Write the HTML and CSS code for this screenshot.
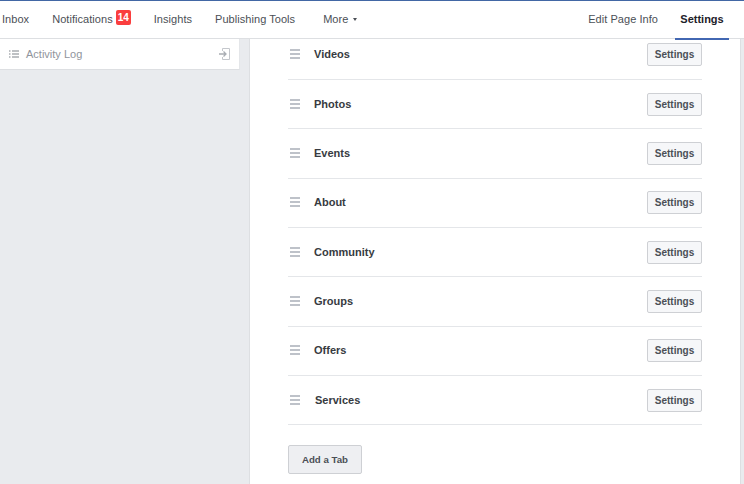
FILE: index.html
```html
<!DOCTYPE html>
<html lang="en">
<head>
<meta charset="utf-8">
<title>Page Settings</title>
<link rel="stylesheet" href="styles.css">
</head>
<body>
<header class="topbar">
  <nav class="nav nav-left">
    <a class="nav-item nav-inbox">Inbox</a>
    <a class="nav-item nav-notif">Notifications<span class="badge">14</span></a>
    <a class="nav-item nav-insights">Insights</a>
    <a class="nav-item nav-tools">Publishing Tools</a>
    <a class="nav-item nav-more">More<span class="caret"></span></a>
  </nav>
  <nav class="nav nav-right">
    <a class="nav-item nav-edit">Edit Page Info</a>
    <a class="nav-item nav-active">Settings</a>
  </nav>
</header>
<div class="layout">
  <aside class="sidebar">
    <div class="activity">
      <svg class="icon-list" width="10" height="8" viewBox="0 0 10 8"><path d="M0 1h1.500M3 1h7M0 4h1.500M3 4h7M0 7h1.500M3 7h7" stroke="#7f838a" stroke-width="1.100" fill="none"/></svg>
      <span class="activity-label">Activity Log</span>
      <svg class="icon-exit" width="11" height="12" viewBox="0 0 11 12"><path d="M3.500 3V.5h7v11h-7V9" stroke="#c4c7cc" fill="none"/><path d="M0 6h6.500M4.500 3.500L7 6l-2.500 2.500" stroke="#a9adb3" stroke-width="1.300" fill="none"/></svg>
    </div>
  </aside>
  <main class="panel">
    <ul class="tabs">
      <li class="tab"><span class="grip"></span><span class="tab-name">Videos</span><button class="btn">Settings</button></li>
      <li class="tab"><span class="grip"></span><span class="tab-name">Photos</span><button class="btn">Settings</button></li>
      <li class="tab"><span class="grip"></span><span class="tab-name">Events</span><button class="btn">Settings</button></li>
      <li class="tab"><span class="grip"></span><span class="tab-name">About</span><button class="btn">Settings</button></li>
      <li class="tab"><span class="grip"></span><span class="tab-name">Community</span><button class="btn">Settings</button></li>
      <li class="tab"><span class="grip"></span><span class="tab-name">Groups</span><button class="btn">Settings</button></li>
      <li class="tab"><span class="grip"></span><span class="tab-name">Offers</span><button class="btn">Settings</button></li>
      <li class="tab"><span class="grip"></span><span class="tab-name tab-name-services">Services</span><button class="btn">Settings</button></li>
    </ul>
    <button class="add-tab">Add a Tab</button>
  </main>
</div>
</body>
</html>
```
FILE: styles.css
```css
* { box-sizing: border-box; }
html, body { margin: 0; height: 100%; }
body {
  width: 744px;
  height: 484px;
  overflow: hidden;
  background: #e9ebee;
  font-family: "Liberation Sans", Arial, sans-serif;
  font-size: 11px;
  color: #4b4f56;
  display: flex;
  flex-direction: column;
}
.topbar {
  flex: none;
  height: 39px;
  background: #fff;
  border-top: 1px solid #4267a5;
  border-bottom: 1px solid #dddfe2;
  display: flex;
  justify-content: space-between;
}
.nav { display: flex; }
.nav-item {
  display: flex;
  align-items: center;
  height: 38px;
  padding-bottom: 2px;
  color: #4b4f56;
  white-space: nowrap;
  letter-spacing: .05px;
}
.nav-inbox { margin-left: 2px; }
.nav-notif { margin-left: 23px; }
.nav-insights { margin-left: 23px; }
.nav-tools { margin-left: 23px; }
.nav-more { margin-left: 28px; }
.badge {
  margin-left: 3px;
  margin-bottom: 3px;
  width: 15px;
  height: 15px;
  border-radius: 2px;
  background: #fa3e3e;
  color: #fff;
  font-size: 10px;
  font-weight: 700;
  line-height: 15px;
  text-align: center;
}
.caret {
  margin-left: 5px;
  border: 2px solid transparent;
  border-top: 3px solid #4b4f56;
  border-bottom: 0;
}
.nav-edit { margin-right: 17px; }
.nav-active {
  width: 54px;
  margin-right: 15px;
  justify-content: center;
  color: #1d2129;
  font-weight: 700;
  letter-spacing: 0;
  position: relative;
}
.nav-active::after {
  content: "";
  position: absolute;
  left: 0;
  right: 0;
  bottom: -1px;
  height: 2px;
  background: #4267b2;
}
.layout { flex: 1; display: flex; min-height: 0; }
.sidebar { width: 249px; flex: none; }
.activity {
  width: 240px;
  height: 31px;
  background: #fff;
  border-bottom: 1px solid #dddfe2;
  border-right: 1px solid #e4e6e9;
  display: flex;
  align-items: center;
  padding: 0 9px;
}
.activity-label { margin-left: 7px; color: #90949c; flex: 1; }
.panel {
  width: 492px;
  flex: none;
  background: #fff;
  border-left: 1px solid #dddfe2;
  border-right: 1px solid #dddfe2;
  overflow: hidden;
  padding-left: 38px;
}
.tabs {
  list-style: none;
  margin: -8.500px 0 0;
  padding: 0;
  width: 414px;
}
.tab {
  height: 49.350px;
  border-bottom: 1px solid #e4e6e9;
  display: flex;
  align-items: center;
  padding-bottom: 1px;
}
.grip {
  width: 10px;
  height: 10px;
  margin-left: 2px;
  border-top: 2px solid #bec2c9;
  border-bottom: 2px solid #bec2c9;
  position: relative;
}
.grip::after {
  content: "";
  position: absolute;
  left: 0;
  right: 0;
  top: 2px;
  height: 2px;
  background: #bec2c9;
}
.tab-name {
  flex: 1;
  margin-left: 14px;
  font-weight: 700;
  color: #373b41;
}
.tab-name-services { margin-left: 15px; }
.btn {
  width: 55px;
  height: 23px;
  margin-top: 1px;
  padding: 0;
  background: #f6f7f9;
  border: 1px solid #ced0d4;
  border-radius: 2px;
  font: 700 10px "Liberation Sans", Arial, sans-serif;
  color: #4b4f56;
}
.add-tab {
  display: block;
  margin-top: 20px;
  width: 74px;
  height: 29px;
  padding: 0;
  background: #eeeff2;
  border: 1px solid #ced0d4;
  border-radius: 2px;
  font: 700 9.700px "Liberation Sans", Arial, sans-serif;
  color: #4b4f56;
}
```
